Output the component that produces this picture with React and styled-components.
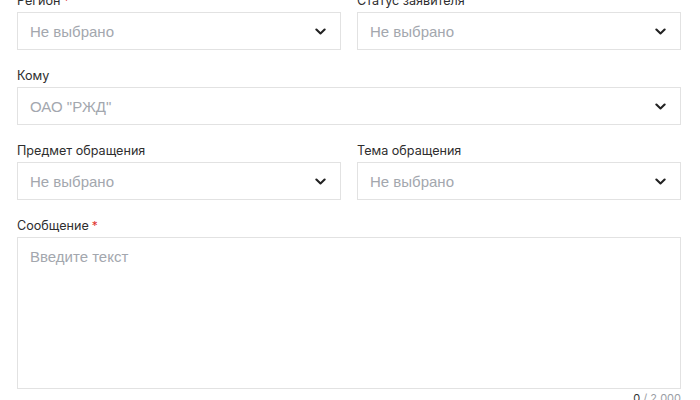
import React from 'react';
import styled, { createGlobalStyle } from 'styled-components';

const GlobalStyle = createGlobalStyle`
  body {
    margin: 0;
    background: #fff;
    font-family: Inter, "Liberation Sans", sans-serif;
  }
`;

function Chevron() {
  return (
    <svg width="11" height="7" viewBox="0 0 11 7">
      <path d="M1.4 1.5 L5.5 5.4 L9.6 1.5" fill="none" stroke="#222" strokeWidth="2.1" strokeLinecap="round" strokeLinejoin="round" />
    </svg>
  );
}

function Select({ label, required, value }) {
  return (
    <Field>
      <Label>
        {label}
        {required && <Star>*</Star>}
      </Label>
      <SelectBox>
        <Placeholder>{value}</Placeholder>
        <Chevron />
      </SelectBox>
    </Field>
  );
}

function App() {
  return (
    <>
      <GlobalStyle />
      <Form>
        <Row>
          <Select label="Регион" required value="Не выбрано" />
          <Select label="Статус заявителя" value="Не выбрано" />
        </Row>
        <Select label="Кому" value={'ОАО "РЖД"'} />
        <Row>
          <Select label="Предмет обращения" value="Не выбрано" />
          <Select label="Тема обращения" value="Не выбрано" />
        </Row>
        <Field>
          <Label>
            Сообщение<Star>*</Star>
          </Label>
          <TextArea placeholder="Введите текст" />
          <Counter>
            <b>0</b> / 2 000
          </Counter>
        </Field>
      </Form>
    </>
  );
}

export default App;

const Form = styled.div`
  margin-top: -8px;
  padding: 0 19px 0 17px;
  display: flex;
  flex-direction: column;
  gap: 17px;
`;
const Row = styled.div`
  display: grid;
  grid-template-columns: 1fr 1fr;
  gap: 16px;
`;
const Field = styled.div`
  display: flex;
  flex-direction: column;
`;
const Label = styled.div`
  font-size: 12.6px;
  line-height: 18px;
  color: #2e2e2e;
  margin-bottom: 2px;
`;
const Star = styled.span`
  color: #e0322f;
  font-size: 12px;
  margin-left: 3px;
`;
const SelectBox = styled.div`
  box-sizing: border-box;
  height: 38px;
  border: 1px solid #e2e2e2;
  display: flex;
  align-items: center;
  justify-content: space-between;
  padding: 0 14px 0 12px;
`;
const Placeholder = styled.span`
  font-family: "Liberation Sans", Arial, sans-serif;
  font-size: 15px;
  color: #a3a7ae;
`;
const TextArea = styled.textarea`
  box-sizing: border-box;
  height: 152px;
  border: 1px solid #e2e2e2;
  padding: 10px 12px;
  resize: none;
  outline: none;
  font-family: "Liberation Sans", Arial, sans-serif;
  font-size: 15px;
  &::placeholder {
    color: #a3a7ae;
  }
`;
const Counter = styled.div`
  align-self: flex-end;
  font-size: 11px;
  line-height: 14px;
  margin-top: 2px;
  color: #9a9ea5;
  b {
    font-weight: 400;
    color: #333;
  }
`;
